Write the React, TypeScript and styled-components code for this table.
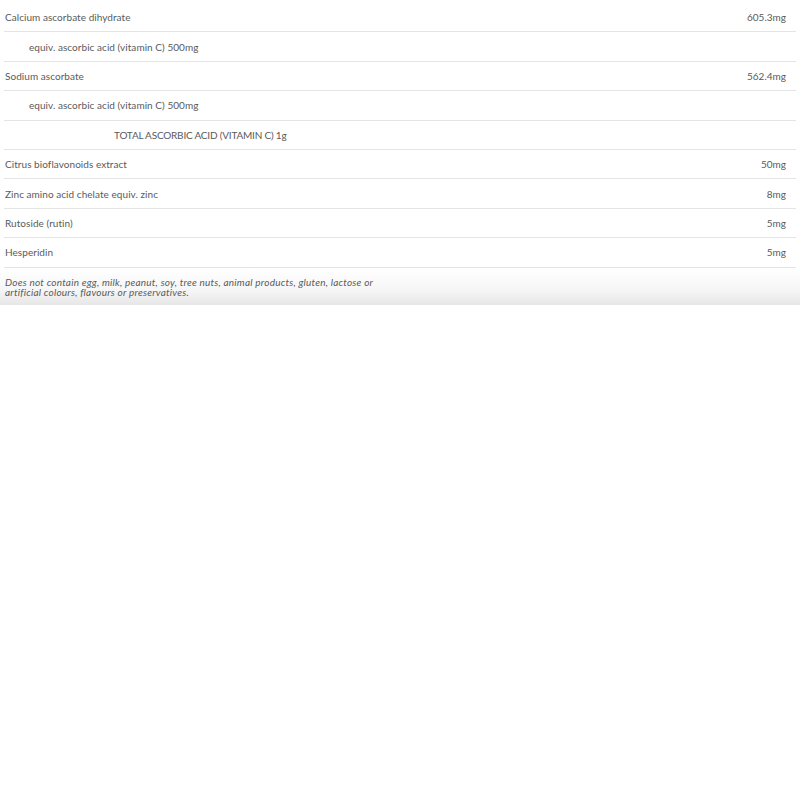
import React from "react";
import styled, { createGlobalStyle } from "styled-components";

const GlobalStyle = createGlobalStyle`
  html, body { margin: 0; padding: 0; background: #ffffff; }
  body { font-family: "Lato", "Liberation Sans", sans-serif; }
`;

const Page = styled.div`
  width: 800px;
  padding-top: 3px;
`;

const Table = styled.div`
  margin: 0 4px;
  display: flex;
  flex-direction: column;
`;

const Row = styled.div`
  display: flex;
  align-items: center;
  justify-content: space-between;
  height: 29.4px;
  border-bottom: 1px solid #e4e4e4;
  box-sizing: border-box;
  padding: 0 10px 0 1px;
  font-size: 10px;
  color: #5a5a5a;
`;

const Name = styled.span<{ $indent: number; $upper?: boolean }>`
  padding-left: ${(p) => p.$indent}px;
  letter-spacing: ${(p) => (p.$upper ? "-0.2px" : "0.05px")};
`;

const Amount = styled.span`
  text-align: right;
`;

const Footer = styled.div`
  height: 37px;
  box-sizing: border-box;
  padding: 9px 5px 0 5px;
  background: linear-gradient(to bottom, #ffffff 0%, #f6f6f6 60%, #e6e6e6 100%);
`;

const Note = styled.p`
  margin: 0;
  font-size: 10px;
  line-height: 10.5px;
  font-style: italic;
  letter-spacing: 0.22px;
  color: #5a5a5a;
`;

const rows: { name: string; amount?: string; indent: number; upper?: boolean }[] = [
  { name: "Calcium ascorbate dihydrate", amount: "605.3mg", indent: 0 },
  { name: "equiv. ascorbic acid (vitamin C) 500mg", indent: 24 },
  { name: "Sodium ascorbate", amount: "562.4mg", indent: 0 },
  { name: "equiv. ascorbic acid (vitamin C) 500mg", indent: 24 },
  { name: "TOTAL ASCORBIC ACID (VITAMIN C) 1g", indent: 109, upper: true },
  { name: "Citrus bioflavonoids extract", amount: "50mg", indent: 0 },
  { name: "Zinc amino acid chelate equiv. zinc", amount: "8mg", indent: 0 },
  { name: "Rutoside (rutin)", amount: "5mg", indent: 0 },
  { name: "Hesperidin", amount: "5mg", indent: 0 },
];

export default function App() {
  return (
    <Page>
      <GlobalStyle />
      <Table>
        {rows.map((r, i) => (
          <Row key={i}>
            <Name $indent={r.indent} $upper={r.upper}>
              {r.name}
            </Name>
            {r.amount && <Amount>{r.amount}</Amount>}
          </Row>
        ))}
      </Table>
      <Footer>
        <Note>
          Does not contain egg, milk, peanut, soy, tree nuts, animal products, gluten, lactose or
          <br />
          artificial colours, flavours or preservatives.
        </Note>
      </Footer>
    </Page>
  );
}
